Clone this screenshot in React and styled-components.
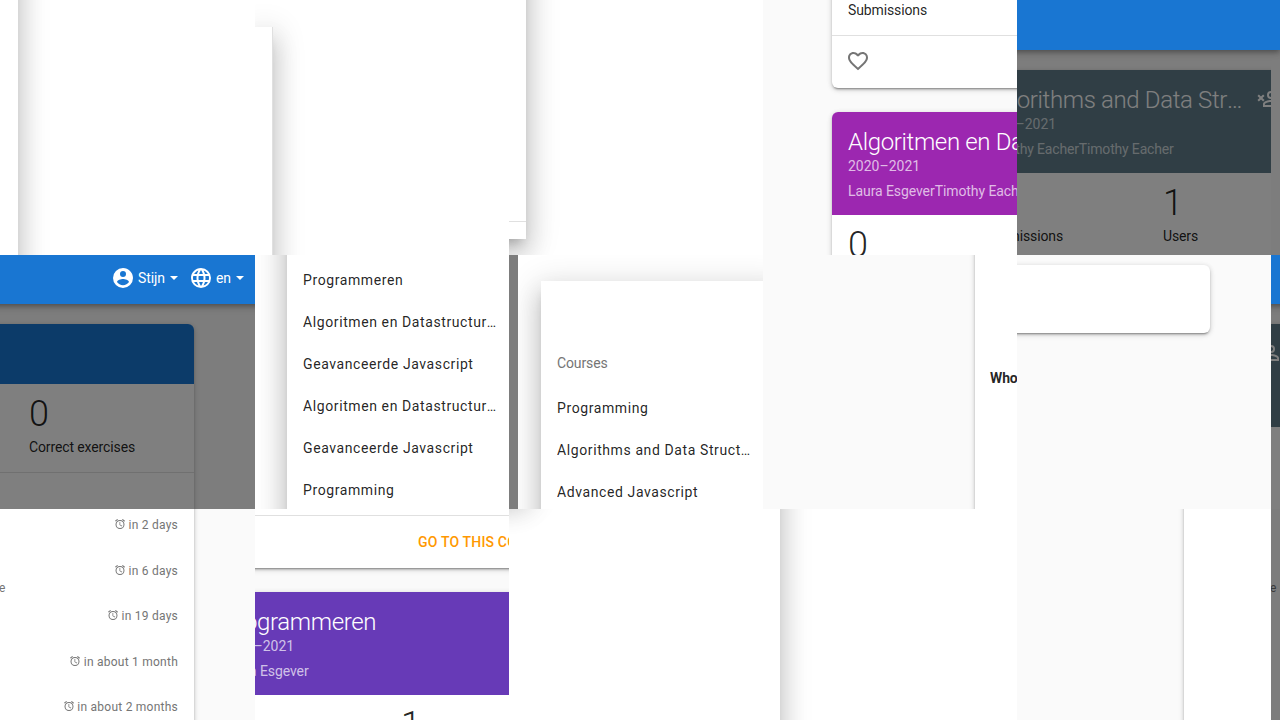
import React from 'react';
import styled, { createGlobalStyle, css } from 'styled-components';

const GlobalStyle = createGlobalStyle`
  *, *::before, *::after { box-sizing: border-box; }
  body {
    margin: 0;
    width: 1280px;
    height: 720px;
    overflow: hidden;
    background: #fff;
    color: rgba(0, 0, 0, 0.87);
    font-family: Roboto, "Liberation Sans", sans-serif;
    font-size: 14px;
    line-height: 20px;
    letter-spacing: -0.12px;
  }
`;

const cardShadow = '0 2px 2px 0 rgba(0,0,0,.14), 0 3px 1px -2px rgba(0,0,0,.2), 0 1px 5px 0 rgba(0,0,0,.12), 0 2px 6px 0 rgba(0,0,0,.1)';
const drawerShadow = '0 8px 10px -5px rgba(0,0,0,.2), 0 16px 24px 2px rgba(0,0,0,.14), 0 6px 30px 5px rgba(0,0,0,.12)';

const Mosaic = styled.main`
  display: grid;
  grid-template-columns: 255px repeat(4, 254px) 9px;
  grid-template-rows: 255px 254px 211px;
  width: 1280px;
  height: 720px;
`;

const Tile = styled.section`
  position: relative;
  display: flow-root;
  overflow: hidden;
  min-width: 0;
  min-height: 0;
  background: ${(p) => (p.$page ? '#fafafa' : '#fff')};
  ${(p) => p.$dim && css`
    background: #fafafa;
    &::after {
      content: '';
      position: absolute;
      inset: 0;
      background: rgba(0, 0, 0, 0.5);
    }
  `}
`;

const Panel = styled.div`
  display: flow-root;
  width: ${(p) => p.$width}px;
  height: ${(p) => p.$height || 420}px;
  margin: ${(p) => p.$top || 0}px 0 0 ${(p) => p.$left || 0}px;
  background: #fff;
  box-shadow: ${(p) => (p.$flat ? cardShadow : drawerShadow)};
  border-right: ${(p) => (p.$edge ? '1px solid rgba(0,0,0,.12)' : '0')};
`;

const NavBar = styled.header`
  position: relative;
  z-index: 2;
  display: flex;
  align-items: center;
  width: ${(p) => p.$width || 350}px;
  height: ${(p) => p.$height || 49}px;
  margin-left: ${(p) => p.$left || -50}px;
  padding: 0 0 3px 161px;
  background: #1976d2;
  color: #fff;
  box-shadow: 0 2px 4px -1px rgba(0,0,0,.2), 0 4px 5px 0 rgba(0,0,0,.14), 0 1px 10px 0 rgba(0,0,0,.12);
`;

const NavItem = styled.div`
  display: flex;
  align-items: center;
  width: 78px;
  gap: 3px;
`;

const Caret = styled.span`
  margin-left: 2px;
  border: 4px solid transparent;
  border-top-color: currentColor;
  border-bottom: 0;
`;

const Card = styled.article`
  width: ${(p) => p.$width || 380}px;
  height: ${(p) => (p.$height ? `${p.$height}px` : 'auto')};
  margin: ${(p) => p.$top || 0}px 0 0 ${(p) => p.$left || 0}px;
  border-radius: 6px;
  background: #fff;
  box-shadow: ${cardShadow};
`;

const CardHead = styled.div`
  display: flex;
  justify-content: space-between;
  height: ${(p) => p.$height || 103}px;
  padding: 16px 16px 14px;
  border-radius: 6px 6px 0 0;
  background: ${(p) => p.$color};
  color: rgba(255, 255, 255, 0.7);
`;

const HeadText = styled.div`
  width: ${(p) => p.$width || 340}px;
`;

const Title = styled.h2`
  margin: 0;
  overflow: hidden;
  text-overflow: ellipsis;
  white-space: nowrap;
  color: #fff;
  font-size: 24px;
  font-weight: 300;
  letter-spacing: -0.35px;
  line-height: 28px;
`;

const Year = styled.div`
  letter-spacing: 0;
`;

const Teachers = styled.div`
  margin-top: 5px;
  letter-spacing: ${(p) => (p.$tight ? -0.17 : -0.08)}px;
  white-space: nowrap;
`;

const HeadIcon = styled.div`
  margin-top: 1px;
  color: #fff;
`;

const Stats = styled.div`
  display: flex;
  height: 88px;
  padding: 10px 16px 15px;
`;

const StatBox = styled.div`
  flex: none;
  width: ${(p) => p.$width || 179}px;
`;

const StatValue = styled.div`
  height: 40px;
  margin-bottom: 3px;
  font-size: 36px;
  font-weight: 300;
  line-height: 40px;
`;

const CardFooter = styled.footer`
  display: flex;
  align-items: center;
  height: 53px;
  padding: 0 14px 2px;
  border-top: 1px solid rgba(0, 0, 0, 0.12);
  color: #757575;
`;

const CourseLink = styled.span`
  margin: 2px 0 0 198px;
  color: #ff9800;
  font-weight: 500;
  letter-spacing: 0.18px;
  white-space: nowrap;
`;

const CourseList = styled.nav`
  padding: ${(p) => p.$pad}px 28px 0 16px;
`;

const ListLabel = styled.div`
  margin-bottom: 14px;
  color: #757575;
`;

const Course = styled.div`
  height: 42px;
  overflow: hidden;
  text-overflow: ellipsis;
  white-space: nowrap;
  letter-spacing: 0.6px;
  line-height: 42px;
`;

const Tasks = styled.div`
  width: 194px;
  height: 260px;
  margin-top: -20px;
  padding: 20px 16px 0 0;
  background: #fff;
  box-shadow: ${cardShadow};
  color: #757575;
  font-size: 12px;
  letter-spacing: 0.24px;
`;

const Task = styled.div`
  display: flex;
  justify-content: space-between;
  height: ${(p) => (p.$first ? 38.9 : 45.4)}px;
  padding-top: ${(p) => (p.$first ? 6 : 13)}px;
`;

const Due = styled.div`
  display: flex;
  align-items: flex-start;
  gap: 2.5px;
  margin-left: auto;
  line-height: 20px;
  svg { margin-top: 3px; }
`;

const Description = styled.div`
  margin-left: -1px;
  padding-top: ${(p) => p.$top}px;
  color: #757575;
  font-size: 12px;
`;

const Question = styled.div`
  padding: 163px 0 0 15px;
  font-weight: 700;
`;

const Divider = styled.div`
  margin-top: ${(p) => p.$top}px;
  border-top: 1px solid rgba(0, 0, 0, 0.12);
`;

const BrightPage = styled.div`
  position: relative;
  z-index: 1;
  display: flow-root;
  height: 254px;
  margin-left: 9px;
  background: #fff;
  overflow: hidden;
`;

const Glyph = ({ d, size = 24 }) => (
  <svg width={size} height={size} viewBox="0 0 24 24" fill="currentColor" style={{ flex: 'none', display: 'block' }}>
    <path fillRule="evenodd" d={d} />
  </svg>
);

const icons = {
  heart: 'M12.1,18.55L12,18.65L11.89,18.55C7.14,14.24 4,11.39 4,8.5C4,6.5 5.5,5 7.5,5C9.04,5 10.54,6 11.07,7.36H12.93C13.46,6 14.96,5 16.5,5C18.5,5 20,6.5 20,8.5C20,11.39 16.86,14.24 12.1,18.55M16.5,3C14.76,3 13.09,3.81 12,5.08C10.91,3.81 9.24,3 7.5,3C4.42,3 2,5.41 2,8.5C2,12.27 5.4,15.36 10.55,20.03L12,21.35L13.45,20.03C18.6,15.36 22,12.27 22,8.5C22,5.41 19.58,3 16.5,3Z',
  account: 'M12,19.2C9.5,19.2 7.29,17.92 6,16C6.03,14 10,12.9 12,12.9C14,12.9 17.97,14 18,16C16.71,17.92 14.5,19.2 12,19.2M12,5A3,3 0 0,1 15,8A3,3 0 0,1 12,11A3,3 0 0,1 9,8A3,3 0 0,1 12,5M12,2A10,10 0 0,0 2,12A10,10 0 0,0 12,22A10,10 0 0,0 22,12C22,6.47 17.5,2 12,2Z',
  web: 'M16.36,14C16.44,13.34 16.5,12.68 16.5,12C16.5,11.32 16.44,10.66 16.36,10H19.74C19.9,10.64 20,11.31 20,12C20,12.69 19.9,13.36 19.74,14M14.59,19.56C15.19,18.45 15.65,17.25 15.97,16H18.92C17.96,17.65 16.43,18.93 14.59,19.56M14.34,14H9.66C9.56,13.34 9.5,12.68 9.5,12C9.5,11.32 9.56,10.65 9.66,10H14.34C14.43,10.65 14.5,11.32 14.5,12C14.5,12.68 14.43,13.34 14.34,14M12,19.96C11.17,18.76 10.5,17.43 10.09,16H13.91C13.5,17.43 12.83,18.76 12,19.96M8,8H5.08C6.03,6.34 7.57,5.06 9.4,4.44C8.8,5.55 8.35,6.75 8,8M5.08,16H8C8.35,17.25 8.8,18.45 9.4,19.56C7.57,18.93 6.03,17.65 5.08,16M4.26,14C4.1,13.36 4,12.69 4,12C4,11.31 4.1,10.64 4.26,10H7.64C7.56,10.66 7.5,11.32 7.5,12C7.5,12.68 7.56,13.34 7.64,14M12,4.03C12.83,5.23 13.5,6.57 13.91,8H10.09C10.5,6.57 11.17,5.23 12,4.03M18.92,8H15.97C15.65,6.75 15.19,5.55 14.59,4.44C16.43,5.07 17.96,6.34 18.92,8M12,2C6.47,2 2,6.5 2,12A10,10 0 0,0 12,22A10,10 0 0,0 22,12A10,10 0 0,0 12,2Z',
  remove: 'M15,4A4,4 0 0,0 11,8A4,4 0 0,0 15,12A4,4 0 0,0 19,8A4,4 0 0,0 15,4M15,5.9C16.16,5.9 17.1,6.84 17.1,8C17.1,9.16 16.16,10.1 15,10.1A2.1,2.1 0 0,1 12.9,8A2.1,2.1 0 0,1 15,5.9M15,13C12.33,13 7,14.33 7,17V20H23V17C23,14.33 17.67,13 15,13M15,14.9C17.97,14.9 21.1,16.36 21.1,17V18.1H8.9V17C8.9,16.36 12,14.9 15,14.9M5,9.59L7.12,7.46L8.54,8.88L6.41,11L8.54,13.12L7.12,14.54L5,12.41L2.88,14.54L1.46,13.12L3.59,11L1.46,8.88L2.88,7.46Z',
  alarm: 'M12,20A7,7 0 0,1 5,13A7,7 0 0,1 12,6A7,7 0 0,1 19,13A7,7 0 0,1 12,20M12,4A9,9 0 0,0 3,13A9,9 0 0,0 12,22A9,9 0 0,0 21,13A9,9 0 0,0 12,4M12.5,8H11V14L15.75,16.85L16.5,15.62L12.5,13.25V8M7.88,3.39L6.6,1.86L2,5.71L3.29,7.24L7.88,3.39M22,5.72L17.4,1.86L16.11,3.39L20.71,7.25L22,5.72Z',
};

const CourseHead = ({ title, teachers, color, textWidth, icon }) => (
  <CardHead $color={color}>
    <HeadText $width={textWidth}>
      <Title>{title}</Title>
      <Year>2020–2021</Year>
      <Teachers $tight={icon}>{teachers}</Teachers>
    </HeadText>
    {icon && <HeadIcon><Glyph d={icons.remove} /></HeadIcon>}
  </CardHead>
);

const Stat = ({ value, label, width }) => (
  <StatBox $width={width}>
    <StatValue>{value}</StatValue>
    {label}
  </StatBox>
);

const dutchCourses = [
  'Programmeren',
  'Algoritmen en Datastructuren',
  'Geavanceerde Javascript',
  'Algoritmen en Datastructuren',
  'Geavanceerde Javascript',
  'Programming',
];

const englishCourses = ['Programming', 'Algorithms and Data Structures', 'Advanced Javascript'];

const DueIn = ({ children }) => (
  <Due><Glyph d={icons.alarm} size={12} />{children}</Due>
);

export default function App() {
  return (
    <>
      <GlobalStyle />
      <Mosaic>
        <Tile><Panel $width={18} $top={-80} $height={500} /></Tile>
        <Tile><Panel $width={18} $top={27} $edge /></Tile>
        <Tile>
          <Panel $width={257} $left={-240} $top={-100} $height={339}><Divider $top={321} /></Panel>
        </Tile>
        <Tile $page>
          <Card $left={69} $top={-53}>
            <Stats><Stat label="Submissions" /></Stats>
            <CardFooter><Glyph d={icons.heart} /></CardFooter>
          </Card>
          <Card $left={69} $top={24}>
            <CourseHead color="#9c27b0" title="Algoritmen en Datastructuren" teachers="Laura EsgeverTimothy Eacher" />
            <Stats><Stat value="0" /></Stats>
          </Card>
        </Tile>
        <Tile $dim>
          <NavBar $height={50} />
          <Card $left={-49} $top={20} $width={328}>
            <CourseHead color="#607d8b" title="Algorithms and Data Structures" teachers="Timothy EacherTimothy Eacher" textWidth={264} icon />
            <Stats>
              <Stat value="0" label="Submissions" />
              <Stat value="1" label="Users" />
            </Stats>
          </Card>
        </Tile>
        <Tile $dim><NavBar $height={50} $left={-341} /></Tile>

        <Tile $dim>
          <NavBar>
            <NavItem><Glyph d={icons.account} />Stijn<Caret /></NavItem>
            <NavItem><Glyph d={icons.web} />en<Caret /></NavItem>
          </NavBar>
          <Card $left={-186} $top={20}>
            <CardHead $color="#1976d2" $height={60} />
            <Stats>
              <StatBox $width={199} />
              <Stat value="0" label="Correct exercises" />
            </Stats>
            <CardFooter />
          </Card>
        </Tile>
        <Tile>
          <Panel $width={240} $left={32} $top={-100} $height={600}>
            <CourseList $pad={104}>
              {dutchCourses.map((name, i) => <Course key={i}>{name}</Course>)}
            </CourseList>
          </Panel>
        </Tile>
        <Tile $dim>
          <BrightPage>
            <Panel $width={240} $left={23} $top={26} $height={500}>
              <CourseList $pad={72}>
                <ListLabel>Courses</ListLabel>
                {englishCourses.map((name) => <Course key={name}>{name}</Course>)}
              </CourseList>
            </Panel>
          </BrightPage>
        </Tile>
        <Tile $page>
          <Panel $width={300} $left={212} $top={-50} $height={400} $flat><Question>Who</Question></Panel>
        </Tile>
        <Tile $page><Card $left={-187} $top={10} $height={68} /></Tile>
        <Tile $dim>
          <NavBar />
          <Card $left={-302} $top={20} $width={327}>
            <CardHead $color="#607d8b">
              <HeadText />
              <HeadIcon><Glyph d={icons.remove} /></HeadIcon>
            </CardHead>
            <Stats />
          </Card>
        </Tile>

        <Tile $page>
          <Tasks>
            <Task $first><DueIn>in 2 days</DueIn></Task>
            <Task><Description $top={17}>e</Description><DueIn>in 6 days</DueIn></Task>
            <Task><DueIn>in 19 days</DueIn></Task>
            <Task><DueIn>in about 1 month</DueIn></Task>
            <Task><DueIn>in about 2 months</DueIn></Task>
          </Tasks>
        </Tile>
        <Tile $page>
          <Card $left={-49} $top={-82} $width={400}>
            <Stats />
            <CardFooter><CourseLink>GO TO THIS COURSE</CourseLink></CardFooter>
          </Card>
          <Card $left={-49} $top={24} $width={400}>
            <CourseHead color="#673ab7" title="Programmeren" teachers="Laura Esgever" />
            <Stats>
              <StatBox />
              <Stat value="1" />
            </Stats>
          </Card>
        </Tile>
        <Tile><Panel $width={257} $left={-240} $top={-300} $height={284} /></Tile>
        <Tile><Panel $width={17} $top={-80} $height={500} /></Tile>
        <Tile $page><Panel $width={200} $left={167} $top={-50} $flat /></Tile>
        <Tile $dim><Description $top={69}>e</Description></Tile>
      </Mosaic>
    </>
  );
}
